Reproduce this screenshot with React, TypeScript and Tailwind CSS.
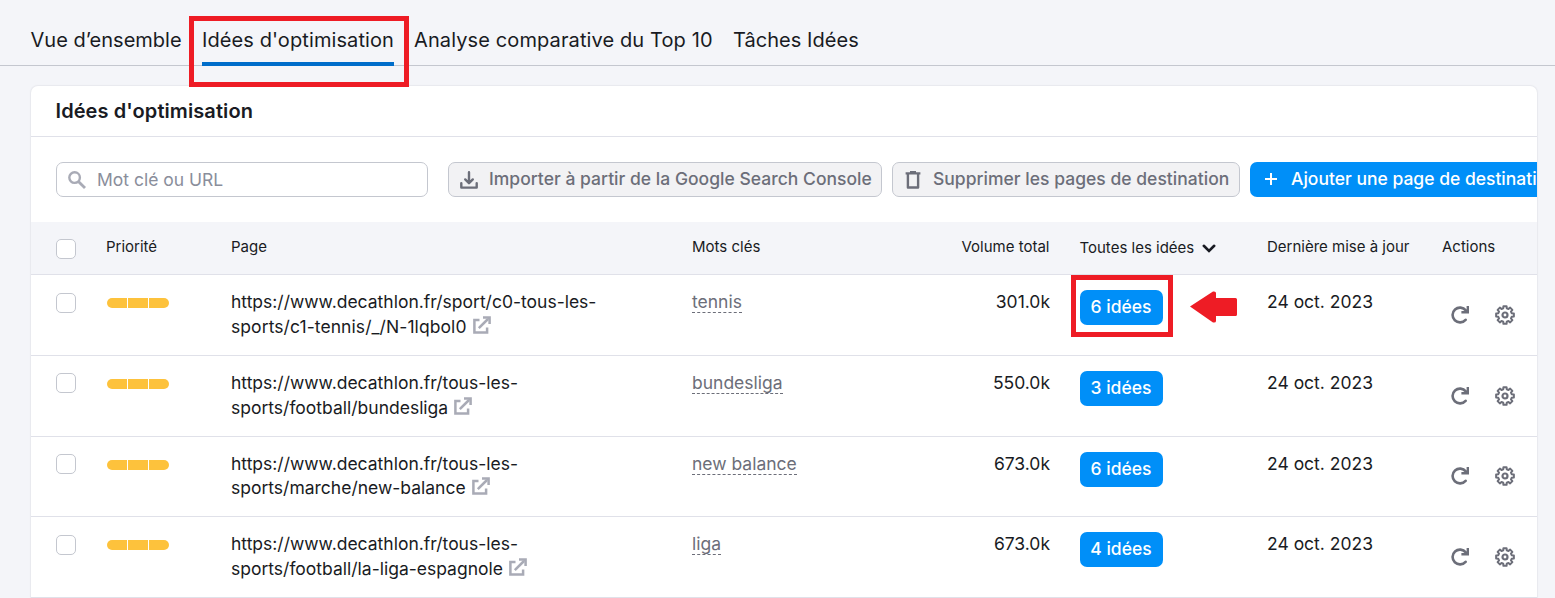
import type { ReactNode } from 'react'

interface IdeaRow {
  url: [string, string]
  urlClass: string
  keyword: string
  volume: string
  ideas: number
  updated: string
  height: string
  checkboxTop: string
  actionsTop: string
}

const TABS = [
  { label: 'Vue d’ensemble', className: 'w-[151px] -ml-[0.5px] mr-[0.5px]' },
  { label: "Idées d'optimisation", className: 'w-[192px] tracking-[0.1px]', active: true },
  { label: 'Analyse comparative du Top 10', className: 'w-[299px] tracking-[0.11px]' },
  { label: 'Tâches Idées', className: 'w-[126px] tracking-[0.04px]' }
]

const ROWS: IdeaRow[] = [
  {
    url: ['https://www.decathlon.fr/sport/c0-tous-les-', 'sports/c1-tennis/_/N-1lqbol0'],
    urlClass: 'tracking-[0.08px]',
    keyword: 'tennis',
    volume: '301.0k',
    ideas: 6,
    updated: '24 oct. 2023',
    height: 'h-[81px]',
    checkboxTop: 'mt-[3px]',
    actionsTop: 'mt-0'
  },
  {
    url: ['https://www.decathlon.fr/tous-les-', 'sports/football/bundesliga'],
    urlClass: '-mt-px pt-px',
    keyword: 'bundesliga',
    volume: '550.0k',
    ideas: 3,
    updated: '24 oct. 2023',
    height: 'h-[81px]',
    checkboxTop: 'mt-[2px]',
    actionsTop: 'mt-0'
  },
  {
    url: ['https://www.decathlon.fr/tous-les-', 'sports/marche/new-balance'],
    urlClass: '-mt-px',
    keyword: 'new balance',
    volume: '673.0k',
    ideas: 6,
    updated: '24 oct. 2023',
    height: 'h-[80px]',
    checkboxTop: 'mt-[2px]',
    actionsTop: '-mt-px'
  },
  {
    url: ['https://www.decathlon.fr/tous-les-', 'sports/football/la-liga-espagnole'],
    urlClass: '',
    keyword: 'liga',
    volume: '673.0k',
    ideas: 4,
    updated: '24 oct. 2023',
    height: 'h-[81px]',
    checkboxTop: 'mt-[3px]',
    actionsTop: 'mt-0'
  }
]

const GRID = 'grid grid-cols-[50px_125px_461px_238px_120px_30px_187px_175px_1fr] items-start pl-[25px]'

// Eight-toothed outline around (10, 10)
const GEAR_PATH = (() => {
  const points: string[] = []
  for (let i = 0; i < 8; i++) {
    const base = i * 45
    for (const [offset, radius] of [[-15, 6.9], [-10, 9], [10, 9], [15, 6.9]]) {
      const a = ((base + offset) * Math.PI) / 180
      points.push(`${(10 + radius * Math.sin(a)).toFixed(2)} ${(10 - radius * Math.cos(a)).toFixed(2)}`)
    }
  }
  return `M${points.join('L')}Z`
})()

function SearchIcon() {
  return (
    <svg width="18" height="18" viewBox="0 0 18 18" fill="none" stroke="#a9abb6" strokeWidth="2.4">
      <circle cx="6.6" cy="6.6" r="5.3" />
      <path d="M10.4 10.4 17 17" strokeWidth="2.8" />
    </svg>
  )
}

function DownloadIcon() {
  return (
    <svg width="18" height="18" viewBox="0 0 18 18" fill="none" stroke="#6c6e79" strokeWidth="2.4" strokeLinecap="round" strokeLinejoin="round">
      <path d="M9 1.2v10.6M5.2 8.4 9 12.2l3.8-3.8" />
      <path d="M1.3 12.2v4.4h15.4v-4.4" />
    </svg>
  )
}

function TrashIcon() {
  return (
    <svg width="16" height="18" viewBox="0 0 16 18" fill="none" stroke="#6c6e79" strokeWidth="2.4">
      <path d="M.6 2.4h14.8M5 1.1h6" strokeWidth="2.2" />
      <path d="M2.9 2.5v14h10.2v-14" strokeLinejoin="round" />
    </svg>
  )
}

function ExternalIcon() {
  return (
    <svg className="mb-[3px]" width="18" height="18" viewBox="0 0 18 18" fill="none" stroke="#a9abb6" strokeWidth="2.5">
      <path d="M6.5 3.9H1.4v12.7h12.7v-5.1" />
      <path d="M5.8 12.2 15 3" />
      <path d="M10 1.4h6.6V8" />
      <path d="M13 1h4v4z" fill="#a9abb6" stroke="none" />
    </svg>
  )
}

function RefreshIcon() {
  return (
    <svg width="18" height="18" viewBox="0 0 18 18" fill="none" stroke="#6c6e79" strokeWidth="2.6">
      <path d="M14.6 13.8A7.4 7.4 0 1 1 14.8 4.4" strokeLinecap="round" />
      <path d="M18 0v7.5H10.4V5h4l1.2-1.2V0z" fill="#6c6e79" stroke="none" />
    </svg>
  )
}

function GearIcon() {
  return (
    <svg width="20" height="20" viewBox="0 0 20 20" fill="none" stroke="#6c6e79" strokeWidth="2" strokeLinejoin="round">
      <path d={GEAR_PATH} />
      <circle cx="10" cy="10" r="2.5" strokeWidth="2.2" />
    </svg>
  )
}

function Checkbox({ className = '' }: { className?: string }) {
  return <span className={`block size-5 rounded-[5px] border border-[#c4c7cf] bg-white ${className}`} />
}

function SecondaryButton({ icon, children, className }: { icon: ReactNode; children: ReactNode; className: string }) {
  return (
    <button className={`flex h-[35px] shrink-0 items-center rounded-[7px] border border-[#c4c7cf] bg-[#f2f2f4] text-[17.5px] font-medium whitespace-nowrap text-[#6c6e79] ${className}`}>
      {icon}
      {children}
    </button>
  )
}

function PriorityBar() {
  return (
    <div className="mt-[9px] ml-px flex gap-px">
      <span className="h-2.5 w-5 rounded-l-full bg-[#fdc23c]" />
      <span className="h-2.5 w-5 bg-[#fdc23c]" />
      <span className="h-2.5 w-5 rounded-r-full bg-[#fdc23c]" />
    </div>
  )
}

function Row({ row, highlighted }: { row: IdeaRow; highlighted: boolean }) {
  return (
    <div className={`${GRID} ${row.height} border-b border-[#e0e1e9] pt-3.5 text-[17.5px] leading-[25px] text-[#191b23]`}>
      <div className="pt-px">
        <Checkbox className={row.checkboxTop} />
      </div>
      <PriorityBar />
      <div className="whitespace-nowrap">
        <div className="h-[25px]">{row.url[0]}</div>
        <div className={`flex h-[25px] items-center gap-1.5 ${row.urlClass}`}>
          {row.url[1]}
          <ExternalIcon />
        </div>
      </div>
      <div>
        <span className="inline-block h-6 border-b border-dashed border-[#6c6e79] text-[#6c6e79]">{row.keyword}</span>
      </div>
      <div className="text-right">{row.volume}</div>
      <div />
      <div className="relative mt-px">
        <button className="flex h-[35px] w-[83px] items-center justify-center rounded-[7px] bg-[#008ff8] pr-px pb-0.5 font-medium text-white">
          {row.ideas} idées
        </button>
        {highlighted && (
          <>
            <div className="absolute -top-[15px] -left-[9px] h-[62px] w-[102px] border-5 border-[#ee1c25]" />
            <svg className="absolute top-px left-[110px]" width="48" height="32" viewBox="0 0 48 32" fill="#ee1c25">
              <path d="M0 15.5 23 0.5Q26 0 26 2V7H45.5Q47 7 47 8.5V23.5Q47 25 45.5 25H26V30Q26 32 23 31.5Z" />
            </svg>
          </>
        )}
      </div>
      <div>{row.updated}</div>
      <div className="pt-px">
        <div className={`flex h-[50px] items-center gap-[26px] pl-[9px] ${row.actionsTop}`}>
          <RefreshIcon />
          <GearIcon />
        </div>
      </div>
    </div>
  )
}

export default function App() {
  return (
    <div className="h-[598px] w-[1555px] overflow-hidden bg-[#f4f5f9] font-[Inter,sans-serif] text-[#191b23]">
      {/* Tabs */}
      <nav className="flex h-[66px] gap-5 border-b border-[#c4c7cf] pl-[31px] text-[20px] whitespace-nowrap">
        {TABS.map((tab) => (
          <div key={tab.label} className={`relative shrink-0 pt-[25px] leading-[30px] ${tab.className}`}>
            {tab.label}
            {tab.active && (
              <>
                <span className="absolute bottom-[-1px] left-0 h-1 w-full bg-[#006dca]" />
                <span className="absolute top-4 -left-[13px] z-10 h-[71px] w-[220px] border-5 border-[#ee1c25]" />
              </>
            )}
          </div>
        ))}
      </nav>

      <main className="mt-5 ml-[31px] h-[520px] w-[1506px] overflow-hidden rounded-t-[7px] bg-white shadow-[0_0_1px_1px_#e8e9ee]">
        <h1 className="h-[51px] border-b border-[#e0e1e9] pl-[24.5px] text-[20px] leading-[50px] font-semibold tracking-[0.09px]">
          Idées d'optimisation
        </h1>

        {/* Toolbar */}
        <div className="flex h-[85px] items-center pl-[25px]">
          <div className="flex h-[35px] w-[372px] shrink-0 items-center gap-[11px] rounded-[7px] border border-[#c4c7cf] pl-[11px] text-[17.5px] text-[#8a8e9b]">
            <SearchIcon />
            <span className="pt-0.5">Mot clé ou URL</span>
          </div>
          <SecondaryButton icon={<DownloadIcon />} className="ml-5 w-[434px] gap-[11px] pl-[11px] tracking-[0.02px]">
            Importer à partir de la Google Search Console
          </SecondaryButton>
          <SecondaryButton icon={<TrashIcon />} className="ml-2.5 w-[348px] gap-3 pl-3 tracking-[0.02px]">
            Supprimer les pages de destination
          </SecondaryButton>
          <button className="ml-2.5 flex h-[35px] w-[330px] shrink-0 items-center gap-[13px] rounded-[7px] bg-[#008ff8] pl-3.5 text-[17.5px] font-medium whitespace-nowrap text-white">
            <svg className="-mt-px" width="14" height="14" viewBox="0 0 14 14" stroke="currentColor" strokeWidth="2">
              <path d="M7 1v12M1 7h12" />
            </svg>
            Ajouter une page de destination
          </button>
        </div>

        {/* Table header */}
        <div className={`${GRID} h-[53px] border-b border-[#e0e1e9] bg-[#f4f5f9] pt-[15px] text-[15px] leading-5`}>
          <Checkbox className="mt-0.5" />
          <div>Priorité</div>
          <div>Page</div>
          <div>Mots clés</div>
          <div className="pr-[0.5px] text-right">Volume total</div>
          <div />
          <div className="mt-px -ml-[0.5px] flex items-center gap-[7.5px]">
            Toutes les idées
            <svg width="14" height="9" viewBox="0 0 14 9" fill="none" stroke="#191b23" strokeWidth="2.6" strokeLinecap="round">
              <path d="M1.8 1.8 7 6.9l5.2-5.1" />
            </svg>
          </div>
          <div>Dernière mise à jour</div>
          <div>Actions</div>
        </div>

        {ROWS.map((row, i) => (
          <Row key={row.keyword} row={row} highlighted={i === 0} />
        ))}
      </main>
    </div>
  )
}
